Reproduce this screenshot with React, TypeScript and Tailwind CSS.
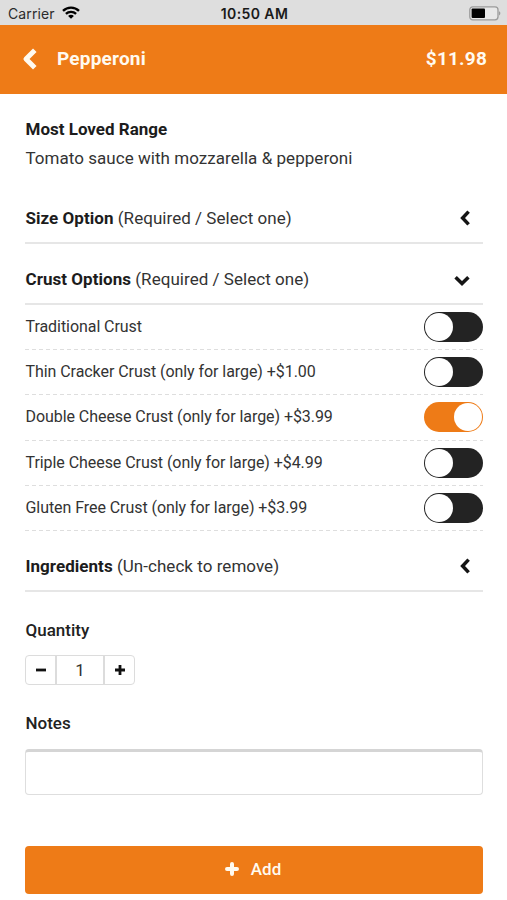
import React, { useState } from "react";

const CRUSTS = [
  { id: "traditional", label: "Traditional Crust" },
  { id: "thin", label: "Thin Cracker Crust (only for large) +$1.00" },
  { id: "double", label: "Double Cheese Crust (only for large) +$3.99" },
  { id: "triple", label: "Triple Cheese Crust (only for large) +$4.99" },
  { id: "gluten-free", label: "Gluten Free Crust (only for large) +$3.99" },
];

const StatusBar: React.FC = () => (
  <div className="grid grid-cols-[1fr_auto_1fr] items-center h-[25px] pt-[2px] pl-[8px] pr-[6px] bg-[#dedede] font-['Inter','Liberation_Sans',sans-serif] text-black">
    <div className="flex items-center gap-[7px]">
      <span className="text-[14px] tracking-[0.1px] text-[#2b2b2b]">Carrier</span>
      <svg viewBox="0 0 18 13" className="w-[18px] h-[13px] mb-[2px]" fill="none" stroke="currentColor" strokeWidth="2.3" aria-hidden="true">
        <path d="M1 4.9a11.3 11.3 0 0 1 16 0" />
        <path d="M3.9 7.9a7.2 7.2 0 0 1 10.2 0" />
        <path d="M9 12.8 6.1 9.9a4 4 0 0 1 5.8 0z" fill="currentColor" stroke="none" />
      </svg>
    </div>
    <span className="text-[14px] font-semibold tracking-[0.4px] text-[#1a1a1a]">10:50 AM</span>
    <svg viewBox="0 0 32 15" className="w-[32px] h-[15px] mb-[1px] justify-self-end" aria-hidden="true">
      <rect x="0.8" y="0.8" width="28.2" height="13" rx="3" fill="#e8e8e8" stroke="#9a9a9a" strokeWidth="1.3" />
      <rect x="2.6" y="2.6" width="13.4" height="9.4" rx="1" fill="#000" />
      <path d="M30.2 5.2c1.5.6 1.5 3.6 0 4.2z" fill="#8d8d8d" />
    </svg>
  </div>
);

const Header: React.FC = () => (
  <header className="flex items-center h-[69px] pl-[22px] pr-[20px] bg-[#ee7b17] text-[#fffaf0] font-bold">
    <button aria-label="Back" className="mr-[19px] mb-[2px]">
      <svg viewBox="0 0 16 22" className="block w-[16px] h-[22px]" fill="none" stroke="currentColor" strokeWidth="5" strokeLinejoin="round" aria-hidden="true">
        <path d="M12.8 2.2 4 11l8.8 8.8" />
      </svg>
    </button>
    <h1 className="flex-1 text-[19px] tracking-[0.2px]">Pepperoni</h1>
    <span className="text-[19px] tracking-[0.2px]">$11.98</span>
  </header>
);

const SectionHeader: React.FC<{ title: string; hint: string; open?: boolean }> = ({ title, hint, open }) => (
  <div className="flex items-center justify-between h-[48px] pl-[0.5px] pr-[13.5px] border-b-2 border-[#e6e6e6]">
    <p className="text-[17px] tracking-[0.04px]">
      <b className="text-[#1c1c1c]">{title}</b> {hint}
    </p>
    {open ? (
      <svg viewBox="0 0 16 12" className="w-[16px] h-[12px] mt-[2px] text-[#151515]" fill="none" stroke="currentColor" strokeWidth="3.5" aria-hidden="true">
        <path d="M1.6 2.2 8 8.6l6.4-6.4" />
      </svg>
    ) : (
      <svg viewBox="0 0 10 16" className="w-[10px] h-[16px] mb-[2px] text-[#151515]" fill="none" stroke="currentColor" strokeWidth="3.5" aria-hidden="true">
        <path d="M8.6 1.6 2.6 8l6 6.4" />
      </svg>
    )}
  </div>
);

const Toggle: React.FC<{ label: string; on: boolean; onClick: () => void }> = ({ label, on, onClick }) => (
  <button
    role="switch"
    aria-checked={on}
    aria-label={label}
    onClick={onClick}
    className={
      on
        ? "flex justify-end items-center w-[59px] h-[30px] p-px rounded-full bg-[#ee7b17]"
        : "flex justify-start items-center w-[59px] h-[30px] p-px rounded-full bg-[#232323]"
    }
  >
    <span className="w-[28px] h-[28px] rounded-full bg-white" />
  </button>
);

export default function App() {
  const [crust, setCrust] = useState("double");
  const [qty, setQty] = useState(1);

  return (
    <div className="flex flex-col w-full h-[900px] overflow-hidden bg-white font-['Roboto','Liberation_Sans',sans-serif] text-[#333]">
      <StatusBar />
      <Header />

      <main className="flex flex-col pl-[25px] pr-[24px] pt-[20px]">
        <h2 className="pl-[0.5px] text-[17px] leading-[30px] font-bold text-[#1c1c1c]">Most Loved Range</h2>
        <p className="pl-[0.5px] text-[17px] leading-[29px] mb-[1px] tracking-[0.04px]">Tomato sauce with mozzarella &amp; pepperoni</p>

        <div className="mt-[22px]">
          <SectionHeader title="Size Option" hint="(Required / Select one)" />
        </div>

        <div className="mt-[13px]">
          <SectionHeader title="Crust Options" hint="(Required / Select one)" open />
          {CRUSTS.map((c) => (
            <div key={c.id} className="flex flex-col h-[45.2px]">
              <div className="flex flex-1 items-center justify-between pl-[0.5px]">
                <span className="text-[16px] tracking-[-0.06px]">{c.label}</span>
                <Toggle label={c.label} on={crust === c.id} onClick={() => setCrust(c.id)} />
              </div>
              {/* short dashes */}
              <div className="h-px bg-[repeating-linear-gradient(90deg,#dedede_0_4px,transparent_4px_7px)]" />
            </div>
          ))}
        </div>

        <div className="mt-[13px]">
          <SectionHeader title="Ingredients" hint="(Un-check to remove)" />
        </div>

        <h3 className="mt-[26px] pl-[0.5px] text-[17px] leading-[24px] font-medium text-[#222]">Quantity</h3>
        <div className="flex mt-[13px] w-[110px] h-[30px] border border-[#dcdcdc] rounded-[4px] text-[#111]">
          <button aria-label="Less" onClick={() => setQty(Math.max(1, qty - 1))} className="flex items-center justify-center w-[29px]">
            <svg viewBox="0 0 12 12" className="w-[12px] h-[12px]" stroke="currentColor" strokeWidth="2.8" aria-hidden="true">
              <path d="M1 6h10" />
            </svg>
          </button>
          <span className="flex flex-1 items-center justify-center border-x-2 border-[#dcdcdc] pt-px text-[17px] text-[#333]">{qty}</span>
          <button aria-label="More" onClick={() => setQty(qty + 1)} className="flex items-center justify-center w-[29px]">
            <svg viewBox="0 0 12 12" className="w-[12px] h-[12px]" stroke="currentColor" strokeWidth="2.8" aria-hidden="true">
              <path d="M1 6h10M6 1v10" />
            </svg>
          </button>
        </div>

        <h3 className="mt-[26px] pl-[0.5px] text-[17px] leading-[24px] font-medium text-[#222]">Notes</h3>
        <input aria-label="Notes" className="mt-[14px] h-[46px] px-3 border border-t-[3px] border-[#dedede] border-t-[#d5d5d5] rounded-[4px] outline-none" />

        <button className="flex items-center justify-center gap-[12px] mt-[51px] h-[48px] pr-[2px] rounded-[4px] bg-[#ee7b17] text-[17px] font-medium text-[#fffaf0]">
          <svg viewBox="0 0 14 14" className="w-[14px] h-[14px] mb-[1px]" stroke="currentColor" strokeWidth="4" strokeLinecap="round" aria-hidden="true">
            <path d="M2 7h10M7 2v10" />
          </svg>
          Add
        </button>
      </main>
    </div>
  );
}
